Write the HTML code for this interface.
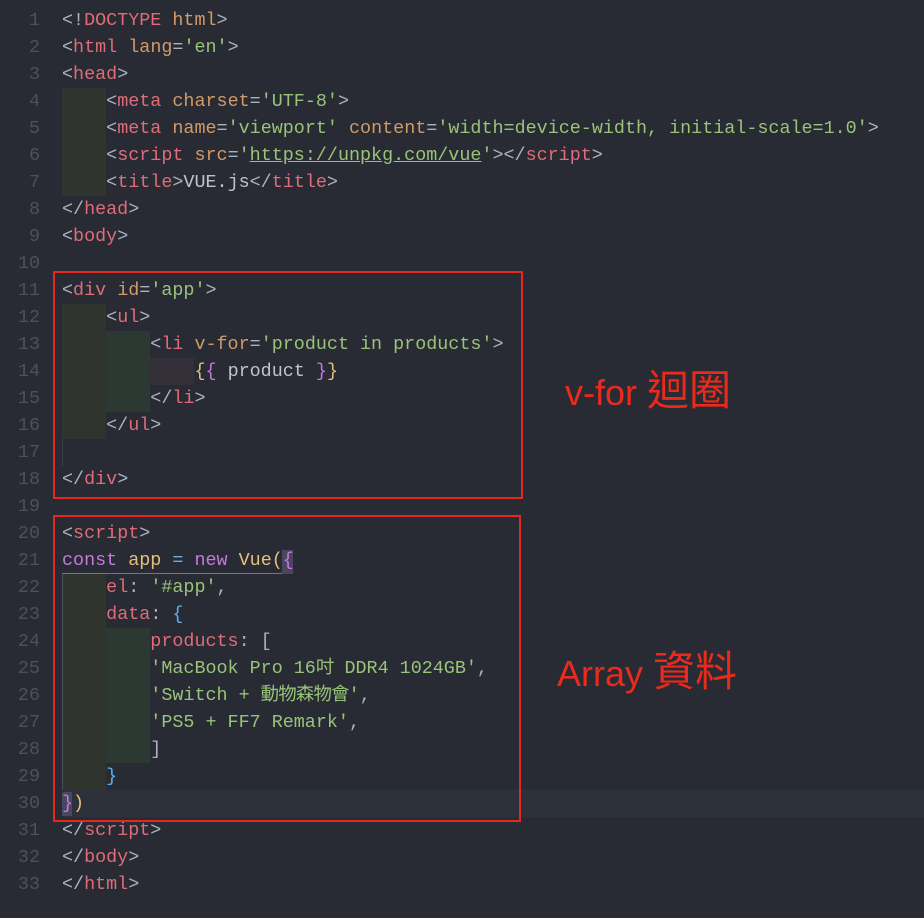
<!DOCTYPE html>
<html><head><meta charset="utf-8"><style>
body{margin:0;width:924px;height:918px;background:#282b33;overflow:hidden;position:relative;font-family:"Liberation Mono","Noto Sans CJK TC",monospace;font-size:18.4px;}
.ln{position:absolute;left:0;width:40px;text-align:right;color:#4b515e;line-height:27px;}
.l{position:absolute;left:62px;line-height:27px;white-space:pre;color:#abb2bf;}
.g{position:absolute;}
.t{color:#df6c78}.a{color:#d29a66}.s{color:#98c379}.p{color:#abb2bf}.k{color:#c678dd}.y{color:#e5c07b}.b{color:#61afef}.w{color:#bfc4cc}
.c{letter-spacing:-0.8px}
.box{position:absolute;border:2.5px solid #e5281c;box-sizing:border-box}
.ann{position:absolute;color:#ec2a1c;font-family:"Liberation Sans","Noto Sans CJK TC",sans-serif;font-size:36px;white-space:nowrap;line-height:48px}
.ann span{font-size:42px;font-weight:normal}
</style></head><body>
<div class="g" style="left:62px;top:790px;width:862px;height:27px;background:#2d313a"></div>
<div class="g" style="left:62px;top:88px;width:44px;height:108px;background:#30342e"></div>
<div class="g" style="left:62px;top:304px;width:44px;height:135px;background:#30342e"></div>
<div class="g" style="left:106px;top:331px;width:44px;height:81px;background:#2c3832"></div>
<div class="g" style="left:150px;top:358px;width:44px;height:27px;background:#343039"></div>
<div class="g" style="left:62px;top:574px;width:44px;height:216px;background:#30342e"></div>
<div class="g" style="left:106px;top:628px;width:44px;height:135px;background:#2c3832"></div>
<div class="g" style="left:62px;top:439px;width:1px;height:27px;background:#3a3f48"></div>
<div class="g" style="left:62px;top:573px;width:230px;height:1px;background:#8a63a8"></div>
<div class="g" style="left:282px;top:550px;width:11px;height:24px;background:#4b4660"></div>
<div class="g" style="left:62px;top:792px;width:10px;height:24px;background:#4b4660"></div>
<div class="g" style="left:62px;top:574px;width:1px;height:216px;background:#4a4f5a"></div>

<div class="ln" style="top:7px">1</div><div class="ln" style="top:34px">2</div><div class="ln" style="top:61px">3</div><div class="ln" style="top:88px">4</div><div class="ln" style="top:115px">5</div><div class="ln" style="top:142px">6</div><div class="ln" style="top:169px">7</div><div class="ln" style="top:196px">8</div><div class="ln" style="top:223px">9</div><div class="ln" style="top:250px">10</div><div class="ln" style="top:277px">11</div><div class="ln" style="top:304px">12</div><div class="ln" style="top:331px">13</div><div class="ln" style="top:358px">14</div><div class="ln" style="top:385px">15</div><div class="ln" style="top:412px">16</div><div class="ln" style="top:439px">17</div><div class="ln" style="top:466px">18</div><div class="ln" style="top:493px">19</div><div class="ln" style="top:520px">20</div><div class="ln" style="top:547px">21</div><div class="ln" style="top:574px">22</div><div class="ln" style="top:601px">23</div><div class="ln" style="top:628px">24</div><div class="ln" style="top:655px">25</div><div class="ln" style="top:682px">26</div><div class="ln" style="top:709px">27</div><div class="ln" style="top:736px">28</div><div class="ln" style="top:763px">29</div><div class="ln" style="top:790px">30</div><div class="ln" style="top:817px">31</div><div class="ln" style="top:844px">32</div><div class="ln" style="top:871px">33</div>

<div class="l" style="top:7px">&lt;!<span class="t">DOCTYPE</span> <span class="a">html</span>&gt;</div>
<div class="l" style="top:34px">&lt;<span class="t">html</span> <span class="a">lang</span>=<span class="s">'en'</span>&gt;</div>
<div class="l" style="top:61px">&lt;<span class="t">head</span>&gt;</div>
<div class="l" style="top:88px">    &lt;<span class="t">meta</span> <span class="a">charset</span>=<span class="s">'UTF-8'</span>&gt;</div>
<div class="l" style="top:115px">    &lt;<span class="t">meta</span> <span class="a">name</span>=<span class="s">'viewport'</span> <span class="a">content</span>=<span class="s">'width=device-width, initial-scale=1.0'</span>&gt;</div>
<div class="l" style="top:142px">    &lt;<span class="t">script</span> <span class="a">src</span>=<span class="s">'<u>https://unpkg.com/vue</u>'</span>&gt;&lt;/<span class="t">script</span>&gt;</div>
<div class="l" style="top:169px">    &lt;<span class="t">title</span>&gt;<span class="w">VUE.js</span>&lt;/<span class="t">title</span>&gt;</div>
<div class="l" style="top:196px">&lt;/<span class="t">head</span>&gt;</div>
<div class="l" style="top:223px">&lt;<span class="t">body</span>&gt;</div>
<div class="l" style="top:277px">&lt;<span class="t">div</span> <span class="a">id</span>=<span class="s">'app'</span>&gt;</div>
<div class="l" style="top:304px">    &lt;<span class="t">ul</span>&gt;</div>
<div class="l" style="top:331px">        &lt;<span class="t">li</span> <span class="a">v-for</span>=<span class="s">'product in products'</span>&gt;</div>
<div class="l" style="top:358px">            <span class="y">{</span><span class="k">{</span> <span class="w">product</span> <span class="k">}</span><span class="y">}</span></div>
<div class="l" style="top:385px">        &lt;/<span class="t">li</span>&gt;</div>
<div class="l" style="top:412px">    &lt;/<span class="t">ul</span>&gt;</div>
<div class="l" style="top:466px">&lt;/<span class="t">div</span>&gt;</div>
<div class="l" style="top:520px">&lt;<span class="t">script</span>&gt;</div>
<div class="l" style="top:547px"><span class="k">const</span> <span class="y">app</span> <span class="b">=</span> <span class="k">new</span> <span class="y">Vue(</span><span class="k">{</span></div>
<div class="l" style="top:574px">    <span class="t">el</span>: <span class="s">'#app'</span>,</div>
<div class="l" style="top:601px">    <span class="t">data</span>: <span class="b">{</span></div>
<div class="l" style="top:628px">        <span class="t">products</span>: [</div>
<div class="l" style="top:655px">        <span class="s">'MacBook Pro 16<span class="c">吋</span> DDR4 1024GB'</span>,</div>
<div class="l" style="top:682px">        <span class="s">'Switch + <span class="c">動物森物會</span>'</span>,</div>
<div class="l" style="top:709px">        <span class="s">'PS5 + FF7 Remark'</span>,</div>
<div class="l" style="top:736px">        ]</div>
<div class="l" style="top:763px">    <span class="b">}</span></div>
<div class="l" style="top:790px"><span class="k">}</span><span class="y">)</span></div>
<div class="l" style="top:817px">&lt;/<span class="t">script</span>&gt;</div>
<div class="l" style="top:844px">&lt;/<span class="t">body</span>&gt;</div>
<div class="l" style="top:871px">&lt;/<span class="t">html</span>&gt;</div>

<div class="box" style="left:53px;top:271px;width:470px;height:228px"></div>
<div class="box" style="left:53px;top:515px;width:468px;height:307px"></div>
<div class="ann" style="left:565px;top:367px">v-for <span>迴圈</span></div>
<div class="ann" style="left:557px;top:648px">Array <span>資料</span></div>
</body></html>
